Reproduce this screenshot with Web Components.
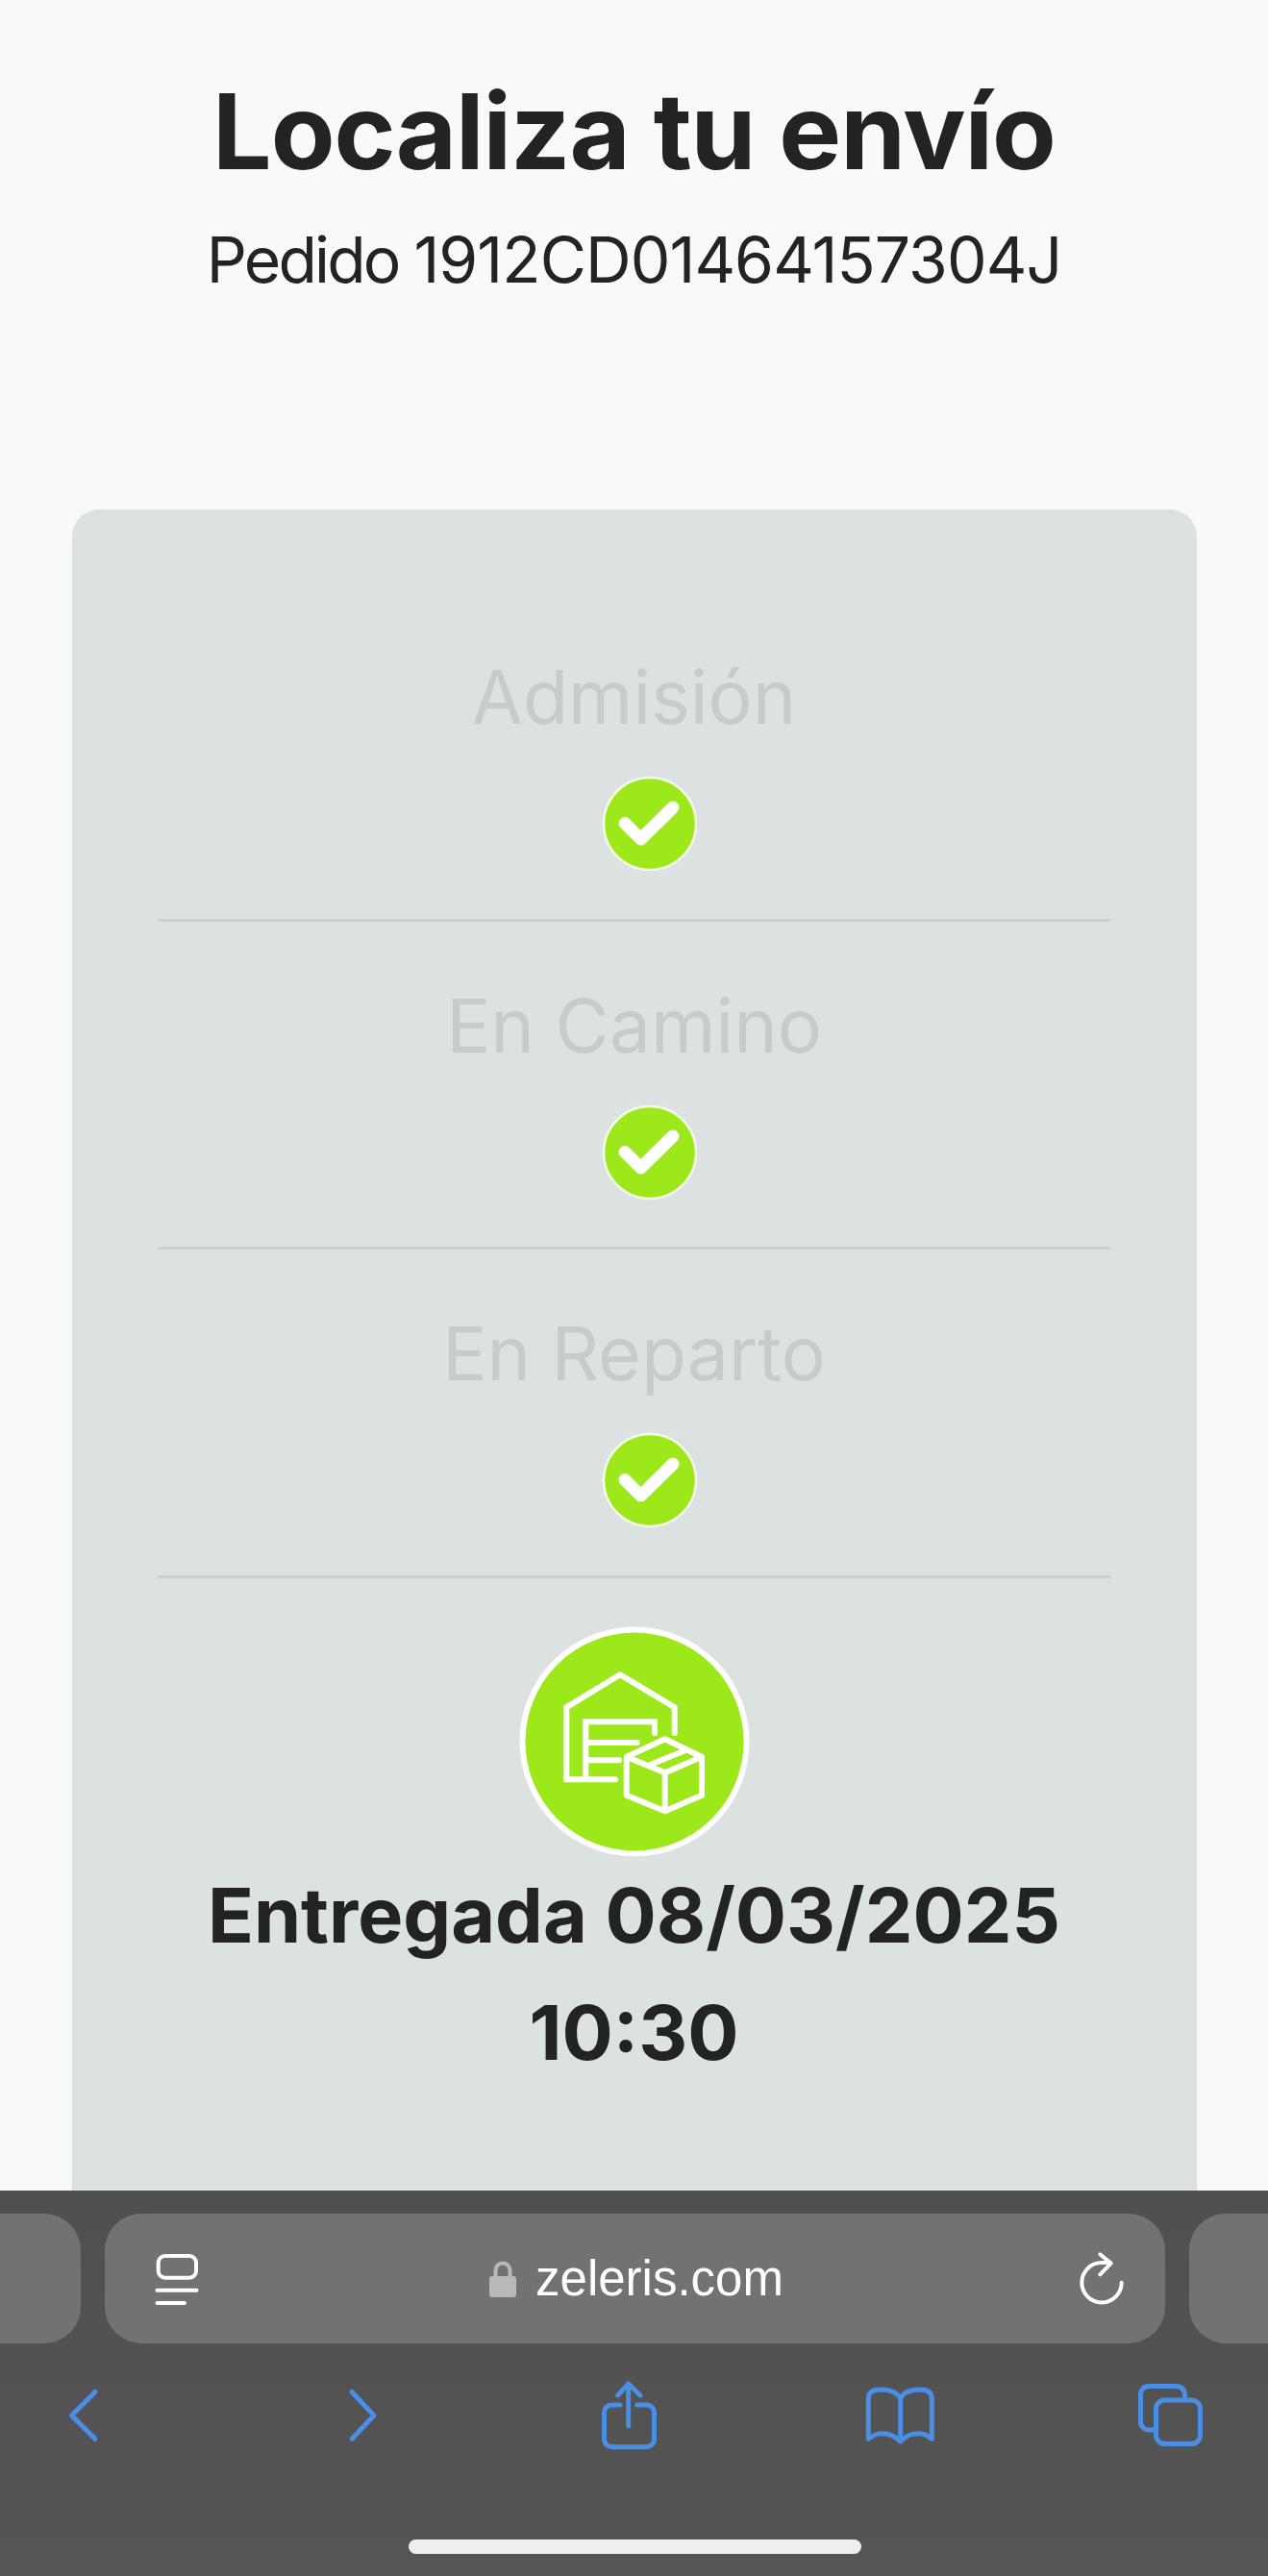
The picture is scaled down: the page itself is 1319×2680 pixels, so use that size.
<!DOCTYPE html>
<html lang="es">
<head>
<meta charset="utf-8">
<title>Localiza tu envío</title>
<style>
  html, body { margin: 0; padding: 0; }
  body {
    width: 1319px;
    height: 2680px;
    overflow: hidden;
    display: flex;
    flex-direction: column;
    background: #f7f9fb;
    font-family: Inter, "Liberation Sans", sans-serif;
  }
</style>
</head>
<body>
  <track-page>
    <track-header order="1912CD01464157304J">Localiza tu envío</track-header>
    <track-card>
      <track-step>Admisión</track-step>
      <track-step>En Camino</track-step>
      <track-step>En Reparto</track-step>
      <track-delivered>Entregada 08/03/2025<br>10:30</track-delivered>
    </track-card>
  </track-page>
  <safari-bar host="zeleris.com"></safari-bar>

<script>
class TrackPage extends HTMLElement {
  constructor() {
    super();
    this.attachShadow({mode: 'open'}).innerHTML = `
      <style>
        :host { display: block; height: 2279px; flex: none; overflow: hidden; }
      </style>
      <slot></slot>
    `;
  }
}

class TrackHeader extends HTMLElement {
  constructor() {
    super();
    const order = this.getAttribute('order');
    this.attachShadow({mode: 'open'}).innerHTML = `
      <style>
        :host { display: block; height: 530px; padding-top: 68px; box-sizing: border-box; text-align: center; color: #212325; }
        h1 { margin: 0; font-size: 109px; line-height: 136px; font-weight: 700; letter-spacing: -1px; }
        p { margin: 26px 0 0; font-size: 66px; line-height: 80px; font-weight: 400; letter-spacing: -0.9px; }
        .word { letter-spacing: -2.8px; }
      </style>
      <h1><slot></slot></h1>
      <p><span class="word">Pedido </span>${order}</p>
    `;
  }
}

class TrackCard extends HTMLElement {
  constructor() {
    super();
    this.attachShadow({mode: 'open'}).innerHTML = `
      <style>
        :host {
          display: block;
          margin: 0 74px 0 75px;
          padding: 87px 90px 0 89px;
          height: 1900px;
          box-sizing: border-box;
          background: #dce2e2;
          border-radius: 28px;
        }
      </style>
      <slot></slot>
    `;
  }
}

class TrackStep extends HTMLElement {
  constructor() {
    super();
    this.attachShadow({mode: 'open'}).innerHTML = `
      <style>
        :host {
          display: flex;
          flex-direction: column;
          align-items: center;
          height: 341.5px;
          padding-top: 61px;
          box-sizing: border-box;
          border-bottom: 3px solid #c9d0d0;
          color: #c6ccce;
          font-size: 77px;
          line-height: 94px;
        }
        .label { display: block; }
        .check { display: block; margin: 35px 0 0 32px; }
      </style>
      <span class="label"><slot></slot></span>
      <svg class="check" width="100" height="100" viewBox="0 0 100 100">
        <circle cx="50" cy="50" r="48" fill="#9ce81b" stroke="#f6fbe9" stroke-width="2.5"/>
        <path d="M24 49.5 L40.5 66 L74 33" fill="none" stroke="#fff" stroke-width="13" stroke-linecap="round" stroke-linejoin="round"/>
      </svg>
    `;
  }
}

class TrackDelivered extends HTMLElement {
  constructor() {
    super();
    this.attachShadow({mode: 'open'}).innerHTML = `
      <style>
        :host {
          display: flex;
          flex-direction: column;
          align-items: center;
          padding-top: 50px;
          color: #212325;
          text-align: center;
          font-size: 79px;
          line-height: 122px;
          font-weight: 700;
        }
        svg { display: block; margin-bottom: -1px; }
      </style>
      <svg width="240" height="240" viewBox="0 0 240 240" fill="none" stroke="#fff" stroke-width="6">
        <circle cx="120" cy="120" r="116.5" fill="#9ce81b" stroke-width="6"/>
        <path stroke-linejoin="miter" stroke-linecap="round" d="M161.7 111 V84.3 L105 50.3 L49.3 84.3 V159.3 H100"/>
        <path stroke-linecap="round" d="M69.3 157 V99.3 H141 V111 M72 121 H122.7 M72 139.3 H104"/>
        <path stroke-linejoin="round" d="M151.7 117.3 L190 135.7 V175.7 L151.7 192.3 L111.7 175.7 V135.7 Z M111.7 135.7 L151.7 152.3 L190 135.7 M151.7 152.3 V192.3 M136 144 L175 128.3"/>
      </svg>
      <div><slot></slot></div>
    `;
  }
}

class SafariBar extends HTMLElement {
  constructor() {
    super();
    const host = this.getAttribute('host');
    this.attachShadow({mode: 'open'}).innerHTML = `
      <style>
        :host {
          display: block;
          flex: none;
          height: 401px;
          background: linear-gradient(#505051, #555556);
          overflow: hidden;
          font-family: "Liberation Sans", Arimo, sans-serif;
        }
        .pills { display: flex; gap: 25px; height: 135px; margin: 24px -26px 0 -70px; }
        .pill { background: #727273; border-radius: 38px; }
        .side { width: 154px; flex: none; }
        .url {
          flex: none;
          width: 1103px;
          display: grid;
          grid-template-columns: 1fr auto 1fr;
          align-items: center;
          padding: 0 40px 0 52px;
          box-sizing: border-box;
          color: #fff;
          font-size: 51px;
        }
        .host { display: flex; align-items: center; gap: 20px; margin-left: -9px; }
        .reload { justify-self: end; }
        .url svg { display: block; }
        .tools { display: flex; align-items: center; height: 100px; margin-top: 24.5px; padding-left: 68px; }
        .tools svg { display: block; flex: none; }
        .tools svg * { fill: none; stroke: #4a8ee6; stroke-width: 5; stroke-linecap: round; stroke-linejoin: round; }
        .fwd { margin-left: 254.5px; }
        .share { margin-left: 228.5px; }
        .book { margin-left: 213px; }
        .tabs { margin-left: 208px; }
        .home { width: 471px; height: 15px; margin: 79.5px 0 0 425px; border-radius: 8px; background: #eeeeee; }
      </style>
      <div class="pills">
        <div class="pill side"></div>
        <div class="pill url">
          <svg width="46" height="56" viewBox="0 0 46 56" fill="none" stroke="#fff" stroke-width="4" stroke-linecap="round">
            <rect x="3.7" y="4" width="39.3" height="22.7" rx="7"/>
            <path d="M2.5 39.7 H43.5 M2.5 53 H31"/>
          </svg>
          <span class="host">
            <svg width="28" height="38" viewBox="0 0 28 38"><path fill="none" stroke="#b9b9bc" stroke-width="4" d="M6.5 18 V10 a7.5 7.5 0 0 1 15 0 V18"/><rect x="0" y="16" width="28" height="22" rx="3" fill="#b9b9bc"/></svg>
            ${host}
          </span>
          <svg class="reload" width="52" height="58" viewBox="0 0 52 58" fill="none" stroke="#fff" stroke-width="4" stroke-linecap="round" stroke-linejoin="round">
            <path d="M46.7 32.7 A20.7 20.7 0 1 1 26 12 H35"/>
            <path d="M24.3 3.3 L35.7 12.7 L24.3 24.3"/>
          </svg>
        </div>
        <div class="pill side"></div>
      </div>
      <div class="tools">
        <svg width="36" height="60" viewBox="0 0 36 60"><path d="M31 5.5 L6.5 30 L31 54.5"/></svg>
        <svg class="fwd" width="36" height="60" viewBox="0 0 36 60"><path d="M7 5.5 L30 30 L7 54.5"/></svg>
        <svg class="share" width="63" height="74" viewBox="0 0 63 74"><path d="M22 26 H13.5 a8 8 0 0 0 -8 8 V61.7 a8 8 0 0 0 8 8 H49.5 a8 8 0 0 0 8 -8 V34 a8 8 0 0 0 -8 -8 H39.7 M30.7 48 V5 M19.7 16 L30.7 4 L43 16"/></svg>
        <svg class="book" width="75" height="64" viewBox="0 0 75 64"><path d="M37.7 14 C34 8 26 5 17 5 C9 5 4.3 8 4.3 14 V56.3 C10 52 14 50.7 18 50.7 C26 50.7 33 54 37.7 59 C42 54 49 50.7 57 50.7 C61 50.7 65 52 70.3 56.3 V14 C70.3 8 66 5 58 5 C49 5 41 8 37.7 14 V59"/></svg>
        <svg class="tabs" width="71" height="69" viewBox="0 0 71 69"><path d="M50.5 15 Q50.5 4.5 41 4.5 H13 a8.5 8.5 0 0 0 -8.5 8.5 V41.5 a8.5 8.5 0 0 0 8.5 8.5 H18"/><rect x="20.5" y="19" width="46" height="45.5" rx="9"/></svg>
      </div>
      <div class="home"></div>
    `;
  }
}

customElements.define('track-page', TrackPage);
customElements.define('track-header', TrackHeader);
customElements.define('track-card', TrackCard);
customElements.define('track-step', TrackStep);
customElements.define('track-delivered', TrackDelivered);
customElements.define('safari-bar', SafariBar);
</script>
</body>
</html>
